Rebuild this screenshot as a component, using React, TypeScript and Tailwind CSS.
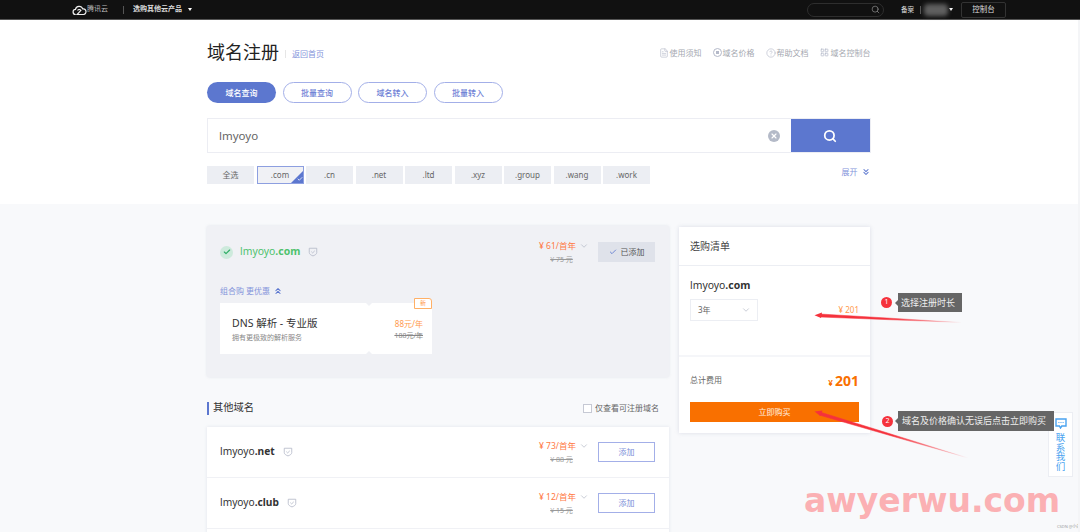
import React from "react"
import { Search, ChevronDown, ChevronsDown, ChevronsUp, Check, X, FileText, CircleHelp, LayoutGrid } from "lucide-react"

const FONT = "font-['Noto_Sans','Noto_Sans_CJK_SC',sans-serif]"

const tabs = ["全选", ".com", ".cn", ".net", ".ltd", ".xyz", ".group", ".wang", ".work"]
const pills = ["域名查询", "批量查询", "域名转入", "批量转入"]

const Shield = ({ className }: { className?: string }) => (
  <svg viewBox="0 0 12 12" fill="none" className={className} stroke="currentColor">
    <path d="M1.5 1.5h9v5.2c0 1.9-2.2 3.2-4.5 4-2.3-.8-4.5-2.1-4.5-4z" strokeWidth="1" />
    <path d="M4 5.6l1.6 1.5 2.5-2.5" strokeWidth="1" />
  </svg>
)

const Price = ({ price, old }: { price: string; old: string }) => (
  <div className="flex flex-col items-center">
    <div className="flex items-center gap-[3px]">
      <span className="text-[8.5px] leading-[12px] text-[#ff7a45]">¥ {price}/首年</span>
      <ChevronDown className="h-[10px] w-[10px] text-[#a9afbd]" strokeWidth={1.5} />
    </div>
    <span className="mr-[5px] mt-[3px] text-[7px] leading-[9px] text-[#9a9a9a] line-through">¥ {old} 元</span>
  </div>
)

const DomainRow = ({ tld, price, old }: { tld: string; price: string; old: string }) => (
  <div className="flex h-[51px] items-center justify-between border-b border-[#f0f1f5] pl-[13px] pr-[14px]">
    <div className="flex items-center">
      <span className="text-[10.2px] text-[#333]">
        lmyoyo<b className="font-bold">{tld}</b>
      </span>
      <Shield className="ml-[8px] h-[10px] w-[10px] text-[#b4b9c9]" />
    </div>
    <div className="flex items-center gap-[9px]">
      <Price price={price} old={old} />
      <button className="h-[20px] w-[57px] border border-[#a3afe8] text-[8px] text-[#7d8ed8]">添加</button>
    </div>
  </div>
)

export default function App() {
  return (
    <div className={`relative h-[532px] w-[1080px] overflow-hidden bg-[#f8f9fb] ${FONT}`}>
      {/* top bar */}
      <div className="flex h-[20px] items-center border-b border-[#555] bg-[#111] pl-[72px] pr-[74px] text-white">
        <svg viewBox="0 0 16 12" className="h-[12px] w-[15px]" fill="none" stroke="#eee" strokeWidth="1.3">
          <path d="M4 10.8a2.7 2.7 0 0 1-.3-5.4 4 4 0 0 1 7.7-.6 3 3 0 0 1 1 6H5.5l4-4.5a2.2 2.2 0 0 0-3.6.2" />
        </svg>
        <span className="text-[7px] text-[#bbb]">腾讯云</span>
        <span className="ml-[15px] h-[8px] w-px bg-[#555]" />
        <span className="ml-[9px] text-[7px] font-bold text-[#ddd]">选购其他云产品</span>
        <span className="ml-[6px] h-0 w-0 border-x-[2.5px] border-t-[3px] border-x-transparent border-t-white" />
        <div className="ml-auto flex h-[14px] w-[77px] items-center justify-end rounded-full border border-[#2e2e2e] pr-[3px]">
          <Search className="h-[9px] w-[9px] text-[#aaa]" strokeWidth={1.5} />
        </div>
        <span className="ml-[17px] text-[6.5px] text-[#ddd]">备案</span>
        <span className="ml-[6px] h-[8px] w-px bg-[#555]" />
        <span className="ml-[3px] h-[12px] w-[24px] rounded-sm bg-[#5f5f5f] blur-[2px]" />
        <span className="ml-[1px] h-0 w-0 border-x-[2.5px] border-t-[3px] border-x-transparent border-t-white" />
        <button className="ml-[8px] h-[16px] w-[45px] rounded-[2px] border border-[#333] text-[7.5px] text-[#ddd]">控制台</button>
      </div>

      {/* header */}
      <div className="h-[184px] bg-white pl-[207px] pr-[209.5px] pt-[22px]">
        <div className="flex h-[21px] items-center">
          <h1 className="text-[18px] font-normal leading-[21px] text-[#222]">域名注册</h1>
          <span className="ml-[6px] mt-[3px] h-[8px] w-px bg-[#e6e6e6]" />
          <a className="ml-[6px] mt-[3px] text-[8px] text-[#8494db]">返回首页</a>
          <div className="ml-auto flex items-center gap-[11px] text-[8px] text-[#a5a8b0]">
            <span className="flex items-center gap-[1px]"><FileText className="h-[10px] w-[10px] text-[#b4b9c9]" strokeWidth={1.5} />使用须知</span>
            <span className="flex items-center gap-[1px]">
              <span className="flex h-[9px] w-[9px] items-center justify-center rounded-full border border-[#b4b9c9]"><span className="h-[3px] w-[3px] bg-[#b4b9c9]" /></span>
              域名价格
            </span>
            <span className="flex items-center gap-[1px]"><CircleHelp className="h-[10px] w-[10px] text-[#b4b9c9]" strokeWidth={1.5} />帮助文档</span>
            <span className="flex items-center gap-[2px]"><LayoutGrid className="h-[9px] w-[9px] text-[#b4b9c9]" strokeWidth={2} />域名控制台</span>
          </div>
        </div>

        <div className="mt-[19px] flex gap-[6.5px]">
          {pills.map((p, i) => (
            <button
              key={p}
              className={`h-[21px] w-[69px] rounded-full text-[8px] font-medium ${
                i === 0 ? "bg-[#5c77cf] text-white" : "border border-[#a3afe8] bg-white text-[#6f82d6]"
              }`}
            >
              {p}
            </button>
          ))}
        </div>

        <div className="mt-[15px] flex h-[35px] border border-[#ecedf3]">
          <div className="flex flex-1 items-center pl-[11px] pr-[11px]">
            <span className="text-[11.5px] text-[#666]">lmyoyo</span>
            <span className="ml-auto flex h-[12px] w-[12px] items-center justify-center rounded-full bg-[#b4bac8]">
              <X className="h-[8px] w-[8px] text-white" strokeWidth={3.5} />
            </span>
          </div>
          <button className="flex w-[79px] items-center justify-center bg-[#5c77cf]">
            <Search className="h-[14px] w-[14px] text-white" strokeWidth={3} />
          </button>
        </div>

        <div className="mt-[13px] flex items-start">
          <div className="flex gap-[2.5px]">
            {tabs.map((t) => (
              <div
                key={t}
                className={`relative flex h-[18px] w-[47px] items-center justify-center overflow-hidden text-[8px] text-[#666] ${
                  t === ".com" ? "border border-[#8d9fe0] bg-[#f0f1f5]" : "bg-[#eceef3]"
                }`}
              >
                {t}
                {t === ".com" && (
                  <span className="absolute bottom-0 right-0 h-0 w-0 border-b-[12px] border-l-[12px] border-b-[#5c77cf] border-l-transparent">
                    <Check className="absolute left-[-6px] top-[5px] h-[6px] w-[6px] text-white" strokeWidth={3} />
                  </span>
                )}
              </div>
            ))}
          </div>
          <div className="ml-auto flex items-center gap-[3px] text-[8px] leading-[12px] text-[#8494db]">
            展开
            <ChevronsDown className="h-[10px] w-[10px] text-[#5c77cf]" strokeWidth={2.5} />
          </div>
        </div>
      </div>

      {/* main */}
      <div className="flex gap-[10px] pl-[207px] pt-[22px]">
        <div className="w-[462px]">
          <div className="h-[151px] rounded-[2px] bg-[#f0f1f5] pl-[13px] pr-[14px] pt-[16px] shadow-[0_0_3px_rgba(210,214,225,0.6)]">
            <div className="flex h-[20px] items-center">
              <span className="flex h-[13px] w-[13px] items-center justify-center rounded-full bg-[#cdeadc]">
                <Check className="h-[8px] w-[8px] text-[#2ead65]" strokeWidth={3.5} />
              </span>
              <span className="ml-[7px] text-[10.4px] text-[#4fc26d]">lmyoyo<b className="font-bold">.com</b></span>
              <Shield className="ml-[8px] h-[10px] w-[10px] text-[#b4b9c9]" />
              <div className="ml-auto flex items-center gap-[9px]">
                <Price price="61" old="75" />
                <button className="flex h-[20px] w-[57px] items-center justify-center gap-[4px] bg-[#dfe2ea] text-[8px] text-[#555]">
                  <Check className="h-[8px] w-[8px] text-[#5c77cf]" strokeWidth={2.5} />
                  已添加
                </button>
              </div>
            </div>
            <div className="mt-[23px] flex h-[12px] items-center gap-[3px] text-[8px] text-[#8494db]">
              组合购 更优惠
              <ChevronsUp className="h-[10px] w-[10px] text-[#5c77cf]" strokeWidth={2.5} />
            </div>
            <div className="relative mt-[6px] flex h-[51px] w-[212px] bg-white">
              <div className="flex-1 pl-[12px] pt-[13px]">
                <div className="text-[10.5px] leading-[14px] text-[#333]">DNS 解析 - 专业版</div>
                <div className="mt-[3px] text-[7px] leading-[10px] text-[#888]">拥有更极致的解析服务</div>
              </div>
              <div className="mr-[9px] flex flex-col items-end pt-[15px]">
                <span className="text-[8px] leading-[12px] text-[#ff9a4d]">88元/年</span>
                <span className="text-[7px] leading-[11px] text-[#888] line-through">188元/年</span>
              </div>
              <span className="absolute left-[146px] top-0 h-0 w-0 border-x-[3px] border-t-[3px] border-x-transparent border-t-[#f0f1f5]" />
              <span className="absolute bottom-0 left-[146px] h-0 w-0 border-x-[3px] border-b-[3px] border-x-transparent border-b-[#f0f1f5]" />
              <span className="absolute right-0 top-[-5px] flex h-[11px] w-[18px] items-center justify-center rounded-tr-[3px] border border-[#ffb066] bg-white text-[6px] text-[#ff9a4d]">新</span>
            </div>
          </div>

          <div className="mt-[22px] flex h-[18px] items-center">
            <span className="h-[13px] w-[2px] bg-[#5c77cf]" />
            <span className="ml-[4px] text-[10.25px] text-[#333]">其他域名</span>
            <span className="ml-auto h-[9px] w-[9px] border border-[#c6c9d4] bg-white" />
            <span className="ml-[3px] mr-[10px] text-[8px] text-[#666]">仅查看可注册域名</span>
          </div>

          <div className="mt-[10px] bg-white shadow-[0_0_3px_rgba(210,214,225,0.6)]">
            <DomainRow tld=".net" price="73" old="88" />
            <DomainRow tld=".club" price="12" old="15" />
            <div className="h-[40px]" />
          </div>
        </div>

        {/* cart */}
        <div className="mt-px h-[206px] w-[191px] bg-white shadow-[0_0_4px_rgba(205,210,222,0.7)]">
          <div className="flex h-[39px] items-center border-b border-[#eceef3] pl-[11px] text-[10px] text-[#444]">选购清单</div>
          <div className="h-[91px] border-b-2 border-[#f5f6f9] px-[11px] pt-[12px]">
            <div className="text-[10.4px] leading-[15px] text-[#333]">lmyoyo<b className="font-bold">.com</b></div>
            <div className="mt-[6px] flex items-end justify-between">
              <div className="flex h-[22px] w-[68px] items-center justify-between border border-[#eceef3] pl-[7px] pr-[6px] text-[8px] text-[#666]">
                3年
                <ChevronDown className="h-[10px] w-[10px] text-[#a9afbd]" strokeWidth={1.5} />
              </div>
              <span className="mb-[5px] text-[8px] text-[#ff9a4d]">¥ 201</span>
            </div>
          </div>
          <div className="px-[11px]">
            <div className="flex h-[45px] items-center justify-between">
              <span className="text-[8px] text-[#666]">总计费用</span>
              <span className="font-bold text-[#f97000]">
                <span className="text-[8px]">¥ </span>
                <span className="text-[14px]">201</span>
              </span>
            </div>
            <button className="block h-[20px] w-[169px] bg-[#f97000] text-[8px] text-white/90">立即购买</button>
          </div>
        </div>
      </div>

      {/* contact widget */}
      <div className="absolute left-[1048px] top-[412px] flex h-[65px] w-[25px] flex-col items-center border border-[#eceef3] bg-white pt-[5px] text-[#4aa3f0]">
        <svg viewBox="0 0 12 11" className="h-[11px] w-[12px]" fill="none">
          <path d="M1 1h10v7H6.8L5.5 10 4.4 8H1z" stroke="currentColor" strokeWidth="1.4" />
          <path d="M3.4 4.5h1M5.5 4.5h1M7.6 4.5h1" stroke="currentColor" strokeWidth="1.2" />
        </svg>
        <span className="mt-[4px] w-[9.5px] text-[9.5px] leading-[9.5px]">联系我们</span>
      </div>

      {/* annotations */}
      <svg className="pointer-events-none absolute inset-0" width="1080" height="532" fill="none">
        <defs>
          <linearGradient id="a1" gradientUnits="userSpaceOnUse" x1="815" y1="315" x2="962" y2="323">
            <stop offset="0" stopColor="#f5323c" />
            <stop offset="0.5" stopColor="#f5323c" />
            <stop offset="1" stopColor="#f5323c" stopOpacity="0" />
          </linearGradient>
          <linearGradient id="a2" gradientUnits="userSpaceOnUse" x1="815" y1="412" x2="968" y2="458">
            <stop offset="0" stopColor="#f5323c" />
            <stop offset="0.5" stopColor="#f5323c" />
            <stop offset="1" stopColor="#f5323c" stopOpacity="0" />
          </linearGradient>
        </defs>
        <path d="M820 314 L962 322.5 L820 317 Z" fill="url(#a1)" stroke="url(#a1)" strokeWidth="0.5" />
        <path d="M814.5 315.3 L822 312.5 L821 318 Z" fill="#f5323c" />
        <path d="M820 412 L968 458 L819 415 Z" fill="url(#a2)" stroke="url(#a2)" strokeWidth="0.5" />
        <path d="M814.5 411.5 L822.5 410.5 L820.5 416 Z" fill="#f5323c" />
      </svg>

      <div className="absolute left-[881px] top-[293px] flex items-center">
        <span className="flex h-[11px] w-[11px] items-center justify-center rounded-full bg-[#f5323c] text-[7px] text-white">1</span>
        <span className="ml-[3px] h-0 w-0 border-y-[3px] border-r-[3px] border-y-transparent border-r-[#666]" />
        <span className="flex h-[19px] w-[64px] items-center bg-[#666] pl-[3px] text-[9px] text-[#eee]">选择注册时长</span>
      </div>
      <div className="absolute left-[882px] top-[411px] flex items-center">
        <span className="flex h-[11px] w-[11px] items-center justify-center rounded-full bg-[#f5323c] text-[7px] text-white">2</span>
        <span className="ml-[2px] h-0 w-0 border-y-[3px] border-r-[3px] border-y-transparent border-r-[#666]" />
        <span className="flex h-[20px] w-[156px] items-center bg-[#666] pl-[4px] text-[9px] text-[#eee]">域名及价格确认无误后点击立即购买</span>
      </div>

      {/* watermark */}
      <div className="absolute left-[804px] top-[477px] font-['DejaVu_Sans',sans-serif] text-[33px] font-bold leading-[48px] text-[#fbb0b3]">
        awyerwu.com
      </div>
      <div className="absolute left-[1057px] top-[524px] whitespace-nowrap text-[4px] leading-[6px] text-[#999]">CSDN @小白</div>
      <div className="absolute right-0 top-[20px] h-[512px] w-[2px] bg-[#f4f5f7]" />
    </div>
  )
}
